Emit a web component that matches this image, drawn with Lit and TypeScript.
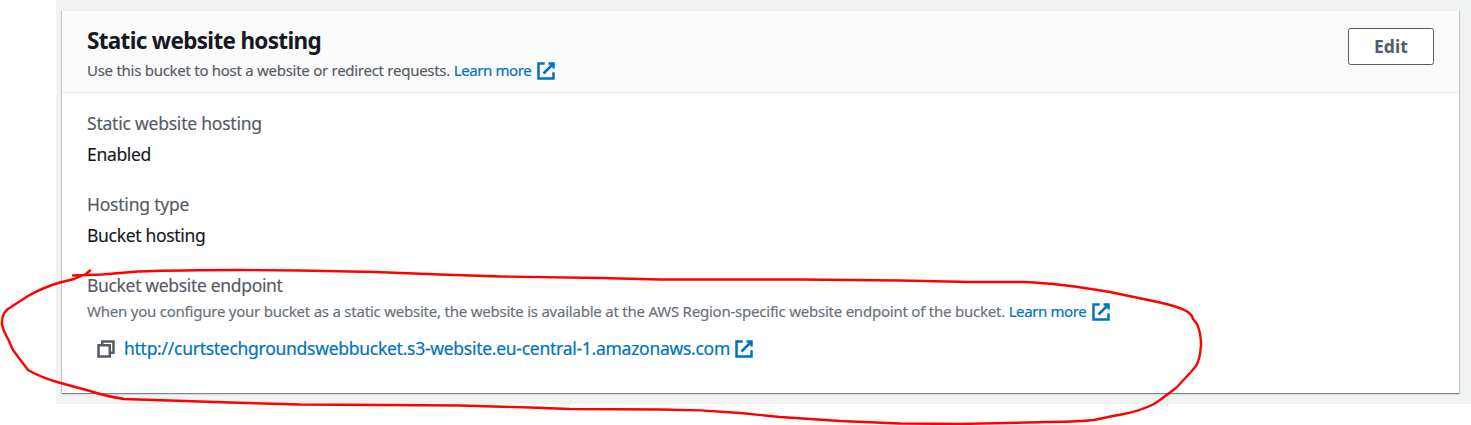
import { LitElement, html, css, svg } from "lit";
import { customElement } from "lit/decorators.js";

const externalIcon = html`<svg class="icon" viewBox="0 0 16 16">
  ${svg`<path d="M10 2h4v4"/><path d="M6 10l8-8"/><path d="M14 9.048V14H2V2h5"/>`}
</svg>`;

const copyIcon = html`<svg class="icon copy" viewBox="0 0 16 16">
  ${svg`<path d="M2 5h9v9H2z"/><path d="M5 5V2h9v9h-3"/>`}
</svg>`;

@customElement("app-root")
export class AppRoot extends LitElement {
  static styles = css`
    :host {
      display: block;
      position: relative;
      height: 425px;
      overflow: hidden;
      background: #fff;
      font-family: "Noto Sans", "Open Sans", sans-serif;
      font-size: 17.5px;
      color: #16191f;
    }
    .page {
      box-sizing: border-box;
      height: 404px;
      margin-left: 56px;
      padding: 10px 12px 11px 6px;
      background: #f1f3f3;
    }
    .panel {
      box-sizing: border-box;
      height: 383px;
      border-top: 1px solid #eaeded;
      background: #fff;
      box-shadow: 0 1px 1px 0 rgba(0, 28, 36, 0.3), 1px 1px 1px 0 rgba(0, 28, 36, 0.15),
        -1px 1px 1px 0 rgba(0, 28, 36, 0.15);
    }
    header {
      box-sizing: border-box;
      display: flex;
      justify-content: space-between;
      align-items: flex-start;
      height: 82px;
      padding: 11px 25px 0;
      border-bottom: 1px solid #eaeded;
      background: #fafafa;
    }
    h2 {
      margin: 0;
      padding-top: 1px;
      font-size: 22.5px;
      line-height: 36px;
      font-weight: 700;
      letter-spacing: -0.677px;
    }
    .hint {
      display: flex;
      align-items: center;
      height: 24px;
      font-size: 15px;
      line-height: 24px;
      color: #545b64;
      white-space: pre;
      letter-spacing: -0.274px;
      -webkit-text-stroke: 0.15px currentColor;
    }
    header .hint {
      margin-top: -1px;
    }
    .hint.desc {
      color: #687078;
      letter-spacing: -0.225px;
    }
    a {
      display: flex;
      align-items: center;
      color: #0073bb;
      text-decoration: none;
      white-space: nowrap;
      -webkit-text-stroke: 0.2px currentColor;
    }
    .hint a {
      letter-spacing: -0.39px;
    }
    .icon {
      flex: none;
      width: 20px;
      height: 20px;
      margin: 1.5px 0 0 4.25px;
      fill: none;
      stroke: currentColor;
      stroke-width: 2;
    }
    .desc .icon {
      margin-left: 5px;
    }
    button {
      box-sizing: border-box;
      width: 86px;
      height: 37px;
      margin-top: 6px;
      padding: 0;
      border: 1px solid #545b64;
      border-radius: 2.5px;
      background: #fff;
      color: #545b64;
      font: 700 17.5px/35px "Noto Sans", sans-serif;
      letter-spacing: 0.08px;
    }
    .body {
      display: flex;
      flex-direction: column;
      gap: 22px;
      padding: 16px 25px 0;
    }
    .label,
    .value {
      line-height: 28px;
      white-space: nowrap;
      -webkit-text-stroke: 0.15px currentColor;
    }
    .label {
      color: #545b64;
      letter-spacing: -0.22px;
    }
    .value {
      margin-top: 3px;
      letter-spacing: -0.32px;
    }
    .label.tight {
      letter-spacing: -0.33px;
    }
    .endpoint {
      display: flex;
      align-items: center;
      height: 28px;
      margin-top: 11px;
      padding-left: 9px;
      line-height: 28px;
      letter-spacing: -0.273px;
    }
    .icon.copy {
      margin: 1.5px 8px 0 0;
      color: #545b64;
    }
    .mark {
      position: absolute;
      left: 0;
      top: 0;
      width: 1471px;
      height: 425px;
      pointer-events: none;
      fill: none;
      stroke: #fe0000;
      stroke-width: 2.4;
      stroke-linecap: round;
      stroke-linejoin: round;
    }
  `;

  render() {
    return html`
      <div class="page">
        <section class="panel">
          <header>
            <div>
              <h2>Static website hosting</h2>
              <div class="hint"><span>Use this bucket to host a website or redirect requests. </span><a>Learn more${externalIcon}</a></div>
            </div>
            <button>Edit</button>
          </header>
          <div class="body">
            <div>
              <div class="label">Static website hosting</div>
              <div class="value">Enabled</div>
            </div>
            <div>
              <div class="label">Hosting type</div>
              <div class="value">Bucket hosting</div>
            </div>
            <div>
              <div class="label tight">Bucket website endpoint</div>
              <div class="hint desc"><span>When you configure your bucket as a static website, the website is available at the AWS Region-specific website endpoint of the bucket. </span><a>Learn more${externalIcon}</a></div>
              <div class="endpoint">${copyIcon}<a>http://curtstechgroundswebbucket.s3-website.eu-central-1.amazonaws.com${externalIcon}</a></div>
            </div>
          </div>
        </section>
      </div>
      <svg class="mark" viewBox="0 0 1471 425">
        <path d="M73 275.5L102 274.5L138 271.5Q180 270 240 270L300 270.5L375 272L440 274.5L500 276.5L600 278L660 279.5L800 279.5L900 280.5L970 282L1025 282Q1060 283.500 1110 292L1160 302.500Q1180 307 1188 312Q1192 315 1193 319L1197 324Q1201 333 1201 345Q1200 360 1196 366L1190 373L1176 388L1160 400L1154 404Q1140 411 1124 414L1113 416L1094 420Q1080 421.500 1050 422L960 424L900 423.500L840 421L780 417L740 413Q700 409.500 660 409.500L570 409L530 407.500L460 405.500L300 404.500L230 402.500L124 399Q105 396 90 391L57 382Q40 377 28 370L22 362L13 350L9 341L4 331L2 325Q1 312 11 307L28 296Q44 287 60 282.500L74 279L86 274L90 270.500"/>
      </svg>
    `;
  }
}
